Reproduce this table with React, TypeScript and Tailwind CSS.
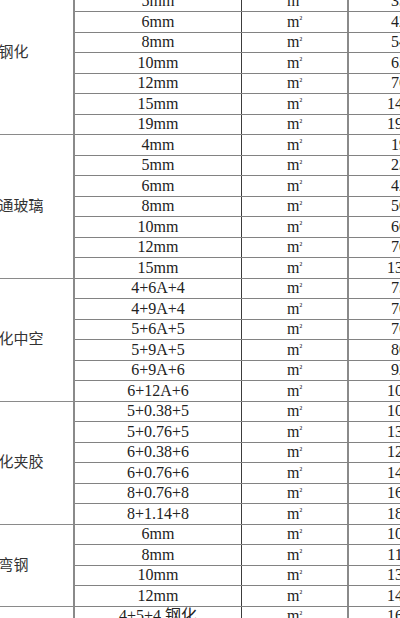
import React from 'react';

type Row = { spec: string; price: string };
type Group = { name: string; rows: Row[] };

const groups: Group[] = [
  {
    name: '钢化',
    rows: [
      { spec: '4mm', price: '28' },
      { spec: '5mm', price: '35' },
      { spec: '6mm', price: '42' },
      { spec: '8mm', price: '54' },
      { spec: '10mm', price: '65' },
      { spec: '12mm', price: '76' },
      { spec: '15mm', price: '145' },
      { spec: '19mm', price: '195' },
    ],
  },
  {
    name: '普通玻璃',
    rows: [
      { spec: '4mm', price: '19' },
      { spec: '5mm', price: '23' },
      { spec: '6mm', price: '42' },
      { spec: '8mm', price: '50' },
      { spec: '10mm', price: '60' },
      { spec: '12mm', price: '70' },
      { spec: '15mm', price: '130' },
    ],
  },
  {
    name: '钢化中空',
    rows: [
      { spec: '4+6A+4', price: '75' },
      { spec: '4+9A+4', price: '70' },
      { spec: '5+6A+5', price: '76' },
      { spec: '5+9A+5', price: '80' },
      { spec: '6+9A+6', price: '92' },
      { spec: '6+12A+6', price: '105' },
    ],
  },
  {
    name: '钢化夹胶',
    rows: [
      { spec: '5+0.38+5', price: '105' },
      { spec: '5+0.76+5', price: '130' },
      { spec: '6+0.38+6', price: '125' },
      { spec: '6+0.76+6', price: '145' },
      { spec: '8+0.76+8', price: '165' },
      { spec: '8+1.14+8', price: '185' },
    ],
  },
  {
    name: '弯钢',
    rows: [
      { spec: '6mm', price: '100' },
      { spec: '8mm', price: '115' },
      { spec: '10mm', price: '135' },
      { spec: '12mm', price: '145' },
    ],
  },
  {
    name: '钢化中空夹胶',
    rows: [
      { spec: '4+5+4 钢化', price: '165' },
      { spec: '5+6+5 钢化', price: '185' },
      { spec: '6+9+6 钢化', price: '210' },
    ],
  },
];

const font = { fontFamily: '"Liberation Serif", "Noto Sans CJK SC", serif' };

const App = () => {
  return (
    <div className="w-[400px] h-[618px] overflow-hidden bg-white text-[16px] text-[#222]" style={font}>
      {/* the shot is a crop: first row and left edge lie outside it */}
      <div className="mt-[-29px] ml-[-46px] w-[500px]">
        {groups.map((group) => (
          <div key={group.name} className="flex">
            <div className="w-[121px] shrink-0 flex items-center justify-center border-r-2 border-b-[1.5px] border-[#8a8a8a]">
              <span className="text-[15px] text-[#333]">{group.name}</span>
            </div>
            <div className="flex flex-col">
              {group.rows.map((row) => (
                <div key={row.spec} className="flex h-[20.5px] border-b-[1.5px] border-[#828282]">
                  <div className="w-[167px] flex items-center justify-center border-r-[1.5px] border-[#3c3c3c] leading-none">
                    {row.spec}
                  </div>
                  <div className="w-[107px] flex items-center justify-center border-r-2 border-[#8a8a8a] leading-none">
                    m<span className="text-[9px] self-start mt-[3px]">²</span>
                  </div>
                  <div className="w-[100px] flex items-center justify-center leading-none">
                    {row.price}
                  </div>
                </div>
              ))}
            </div>
          </div>
        ))}
      </div>
    </div>
  );
};

export default App;
